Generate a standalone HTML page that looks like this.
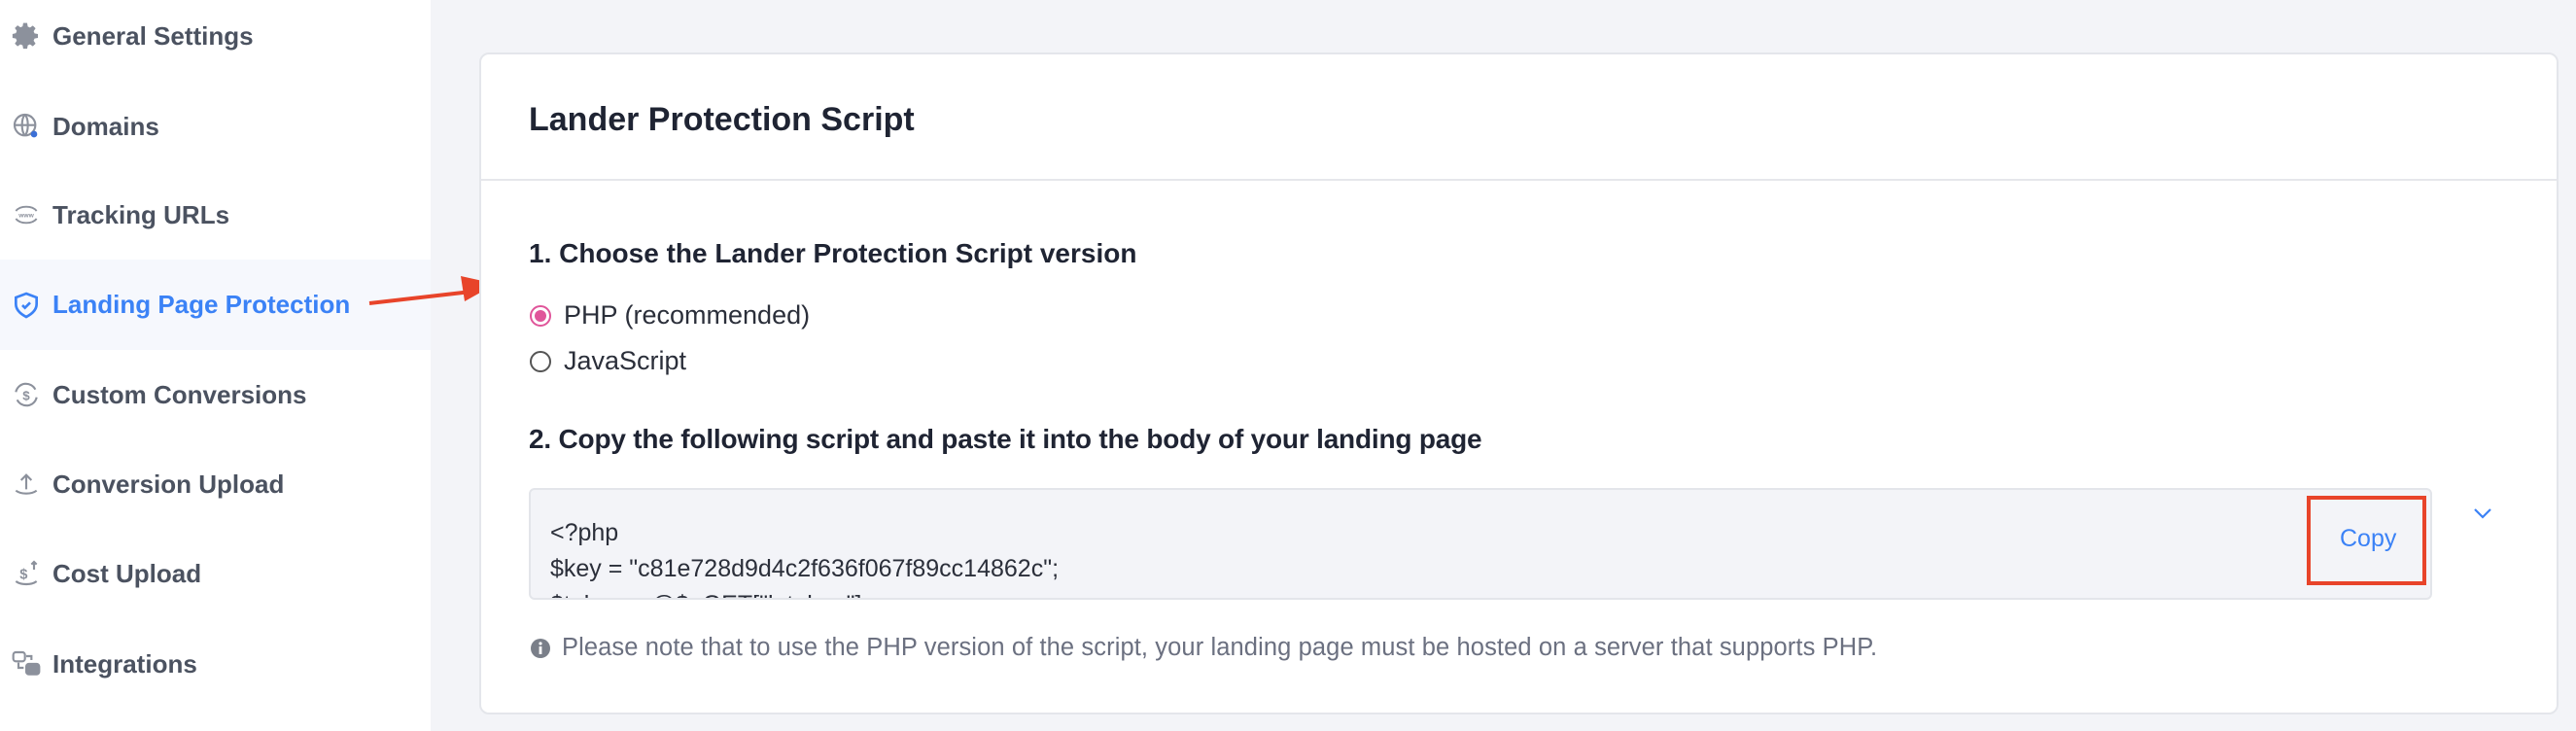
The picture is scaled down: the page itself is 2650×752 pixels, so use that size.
<!DOCTYPE html>
<html><head><meta charset="utf-8"><style>
*{margin:0;padding:0;box-sizing:border-box}
body{width:2650px;height:752px;background:#f3f4f8;font-family:"Liberation Sans",Arial,sans-serif;position:relative;overflow:hidden}
.side{position:absolute;left:0;top:0;width:443px;height:752px;background:#fff}
.item{position:absolute;left:0;width:443px;height:92px;display:flex;align-items:center;font-size:26px;font-weight:bold;color:#4b5260}
.item svg{position:absolute;left:11px;width:32px;height:32px}
.item span{position:absolute;left:54px}
.active{background:#f6f8fd;color:#3b82f6}
.card{position:absolute;left:493px;top:54px;width:2139px;height:681px;background:#fff;border:2px solid #e4e6eb;border-radius:10px}
.abs{position:absolute;white-space:nowrap}
</style></head><body>
<div class="side">
 <div class="item" style="top:-9px"><svg viewBox="0 0 24 24"><path fill="#8c919c" d="M12 8a4 4 0 100 8 4 4 0 000-8zm9 5.5v-3l-2.6-.5-.7-1.7 1.5-2.2-2.1-2.1-2.2 1.5-1.7-.7L12.7 2h-3l-.5 2.6-1.7.7-2.2-1.5-2.1 2.1 1.5 2.2-.7 1.7L1.4 10.5v3l2.6.5.7 1.7-1.5 2.2 2.1 2.1 2.2-1.5 1.7.7.5 2.6h3l.5-2.6 1.7-.7 2.2 1.5 2.1-2.1-1.5-2.2.7-1.7z"/></svg><span>General Settings</span></div>
 <div class="item" style="top:84px"><svg viewBox="0 0 24 24" fill="none" stroke="#8c919c" stroke-width="1.6"><circle cx="11" cy="11" r="8"/><path d="M3 11h16M11 3c-3 3-3 13 0 16M11 3c3 3 3 13 0 16"/><circle cx="18" cy="18" r="2.5" fill="#3b6fd6" stroke="none"/></svg><span>Domains</span></div>
 <div class="item" style="top:175px"><svg viewBox="0 0 24 24" fill="none" stroke="#8c919c" stroke-width="1.4"><path d="M4 9a9 6 0 0116 0M4 15a9 6 0 0016 0"/><text x="12" y="14" font-size="5" text-anchor="middle" fill="#8c919c" stroke="none">www</text></svg><span>Tracking URLs</span></div>
 <div class="item active" style="top:267px;height:93px"><svg viewBox="0 0 24 24" fill="none" stroke="#3b82f6" stroke-width="2"><path d="M12 3l8 3v5c0 5-4 8-8 10-4-2-8-5-8-10V6z"/><path d="M9 12l2 2 4-4"/></svg><span>Landing Page Protection</span></div>
 <div class="item" style="top:360px"><svg viewBox="0 0 24 24" fill="none" stroke="#8c919c" stroke-width="1.6"><path d="M4 10a8 8 0 0115-2M20 14a8 8 0 01-15 2"/><text x="12" y="16" font-size="10" text-anchor="middle" fill="#8c919c" stroke="none" font-weight="bold">$</text></svg><span>Custom Conversions</span></div>
 <div class="item" style="top:452px"><svg viewBox="0 0 24 24" fill="none" stroke="#8c919c" stroke-width="1.6"><path d="M12 16V5M8 9l4-4 4 4M4 17c4 3 12 3 16 0"/></svg><span>Conversion Upload</span></div>
 <div class="item" style="top:544px"><svg viewBox="0 0 24 24" fill="none" stroke="#8c919c" stroke-width="1.6"><path d="M4 18c4 3 12 3 16 0M18 9V3M16 5l2-2 2 2"/><text x="10" y="16" font-size="11" text-anchor="middle" fill="#8c919c" stroke="none" font-weight="bold">$</text></svg><span>Cost Upload</span></div>
 <div class="item" style="top:637px"><svg viewBox="0 0 24 24" fill="none" stroke="#8c919c" stroke-width="1.6"><rect x="2" y="3" width="9" height="7" rx="2"/><rect x="12" y="12" width="10" height="8" rx="2" fill="#8c919c"/><path d="M12 6h4v3M6 11v4h4"/></svg><span>Integrations</span></div>
</div>
<svg class="abs" style="left:370px;top:270px" width="150" height="60"><path d="M10 42L115 30" stroke="#e8442a" stroke-width="4"/><path d="M104 14L140 22 108 40z" fill="#e8442a"/></svg>
<div class="card">
 <div class="abs" style="left:49px;top:48px;font-size:34px;font-weight:bold;color:#1f2433">Lander Protection Script</div>
 <div class="abs" style="left:0;right:0;top:128px;height:2px;background:#e6e7eb"></div>
 <div class="abs" style="left:49px;top:189px;font-size:28px;font-weight:bold;color:#1f2433">1. Choose the Lander Protection Script version</div>
 <div class="abs" style="left:50px;top:258px;width:22px;height:22px;border:2px solid #e0559a;border-radius:50%"><div style="margin:3px;width:12px;height:12px;border-radius:50%;background:#e0559a"></div></div>
 <div class="abs" style="left:85px;top:253px;font-size:27px;color:#2b2f3a">PHP (recommended)</div>
 <div class="abs" style="left:50px;top:305px;width:22px;height:22px;border:2px solid #555;border-radius:50%"></div>
 <div class="abs" style="left:85px;top:300px;font-size:27px;color:#2b2f3a">JavaScript</div>
 <div class="abs" style="left:49px;top:380px;font-size:28px;font-weight:bold;color:#1f2433;letter-spacing:-0.2px">2. Copy the following script and paste it into the body of your landing page</div>
 <div class="abs" style="left:49px;top:446px;width:1958px;height:115px;background:#f3f4f8;border:2px solid #e3e5ea;border-radius:6px;overflow:hidden">
  <div class="abs" style="left:20px;top:26px;font-size:25px;line-height:37px;color:#2b2f3a">&lt;?php<br>$key = "c81e728d9d4c2f636f067f89cc14862c";<br>$token = @$_GET["lptoken"];</div>
 </div>
 <div class="abs" style="left:1878px;top:454px;width:123px;height:92px;border:4px solid #e8442a;"></div>
 <div class="abs" style="left:1912px;top:484px;font-size:25px;color:#3b82f6">Copy</div>
 <svg class="abs" style="left:2048px;top:464px" width="22" height="16" viewBox="0 0 22 16"><path d="M3 4l8 8 8-8" fill="none" stroke="#3b82f6" stroke-width="2.2"/></svg>
 <svg class="abs" style="left:50px;top:600px" width="22" height="22" viewBox="0 0 22 22"><circle cx="11" cy="11" r="10" fill="#7a7f89"/><rect x="9.6" y="9" width="2.8" height="8" fill="#fff"/><circle cx="11" cy="6" r="1.6" fill="#fff"/></svg>
 <div class="abs" style="left:83px;top:596px;font-size:25.5px;color:#6b7080;letter-spacing:0.1px">Please note that to use the PHP version of the script, your landing page must be hosted on a server that supports PHP.</div>
</div>
</body></html>
